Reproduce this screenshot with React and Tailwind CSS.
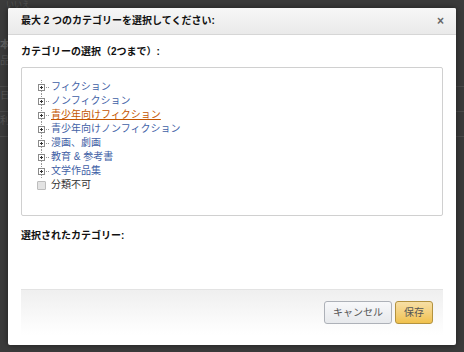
import React from "react";

const CATEGORIES = [
  { label: "フィクション" },
  { label: "ノンフィクション" },
  { label: "青少年向けフィクション", hover: true },
  { label: "青少年向けノンフィクション" },
  { label: "漫画、劇画" },
  { label: "教育 & 参考書" },
  { label: "文学作品集" },
];

function TreeToggle() {
  return (
    <svg width="14" height="14" viewBox="0 0 14 14" className="shrink-0">
      {/* connector lines */}
      <line x1="4.5" y1="0" x2="4.5" y2="3" stroke="#999" strokeDasharray="1 1" />
      <line x1="4.5" y1="11" x2="4.5" y2="14" stroke="#999" strokeDasharray="1 1" />
      <line x1="9" y1="7.5" x2="13" y2="7.5" stroke="#999" strokeDasharray="1 1" />
      {/* box with plus */}
      <rect x="1.5" y="4.5" width="6" height="6" fill="#fff" stroke="#8a8a8a" />
      <line x1="3" y1="7.5" x2="6" y2="7.5" stroke="#333" />
      <line x1="4.5" y1="6" x2="4.5" y2="9" stroke="#333" />
    </svg>
  );
}

// page behind the overlay, barely visible
function PageBehind() {
  return (
    <div className="flex flex-col text-[10px] leading-[14px] text-[#5c5c5c] opacity-80">
      <div className="pl-[6px] h-[9px] text-[8px] leading-[9px]">いいえ</div>
      <div className="mt-[29px] font-bold text-[#6a6a6a]">本</div>
      <div className="mt-[2px]">品</div>
      <div className="mt-[18px] border-t border-[#4f4f4f] pt-[2px]">日</div>
      <div className="mt-[8px] border-t border-[#4f4f4f] pt-[2px]">利</div>
      <div className="mt-[8px] border-t border-[#4f4f4f]" />
    </div>
  );
}

export default function App() {
  return (
    <div
      className="relative w-[464px] h-[352px] overflow-hidden bg-[#3b3b3b]"
      style={{ fontFamily: '"Liberation Sans", "Noto Sans CJK JP", sans-serif' }}
    >
      <PageBehind />

      {/* Modal dialog */}
      <div className="absolute left-[8px] top-[8px] w-[448px] h-[337px] bg-white rounded-[2px] shadow-[0_0_6px_rgba(0,0,0,0.5)] flex flex-col">
        {/* Header */}
        <div className="h-[27px] shrink-0 flex items-center justify-between px-[13px] bg-gradient-to-b from-[#f7f7f7] to-[#eaeaea] border-b border-[#d6d6d6] rounded-t-[2px]">
          <span className="text-[10px] font-bold text-[#111] leading-none">
            最大 2 つのカテゴリーを選択してください:
          </span>
          <span className="text-[12px] font-bold text-[#666] leading-none mr-[-1px]">×</span>
        </div>

        {/* Body */}
        <div className="flex-1 flex flex-col px-[13px]">
          <div className="pt-[10px] text-[10px] leading-[14px] font-bold text-[#111]">
            カテゴリーの選択（2つまで）:
          </div>

          <div className="mt-[8px] h-[149px] border border-[#d0d0d0] rounded-[2px] pt-[12px] pl-[15px]">
            <ul className="flex flex-col text-[10px] leading-[14px]">
              {CATEGORIES.map((c) => (
                <li key={c.label} className="flex items-center h-[14px]">
                  <TreeToggle />
                  <span
                    className={
                      c.hover
                        ? "text-[#c45500] underline decoration-[#c45500] underline-offset-[1px]"
                        : "text-[#3f5fa6]"
                    }
                  >
                    {c.label}
                  </span>
                </li>
              ))}
              <li className="flex items-center h-[14px]">
                <span className="w-[9px] h-[9px] mr-[5px] border border-[#bdbdbd] bg-[#e3e3e3] rounded-[1px]" />
                <span className="text-[#333]">分類不可</span>
              </li>
            </ul>
          </div>

          <div className="mt-[13px] text-[10px] leading-[14px] font-bold text-[#111]">
            選択されたカテゴリー:
          </div>

          {/* Footer */}
          <div className="mt-auto mb-[10px] h-[46px] border-t border-[#e3e3e3] bg-gradient-to-b from-[#efefef] to-white flex items-start justify-end gap-[3px] pt-[11px] pr-[10px]">
            <button
              type="button"
              className="w-[68px] h-[23px] rounded-[3px] border border-[#adb1b8] bg-gradient-to-b from-[#f7f8fa] to-[#e7e9ec] text-[10px] text-[#555]"
            >
              キャンセル
            </button>
            <button
              type="button"
              className="w-[38px] h-[23px] rounded-[3px] border border-[#b3923f] bg-gradient-to-b from-[#f7dfa5] to-[#f0c14b] text-[10px] text-[#555]"
            >
              保存
            </button>
          </div>
        </div>
      </div>
    </div>
  );
}
